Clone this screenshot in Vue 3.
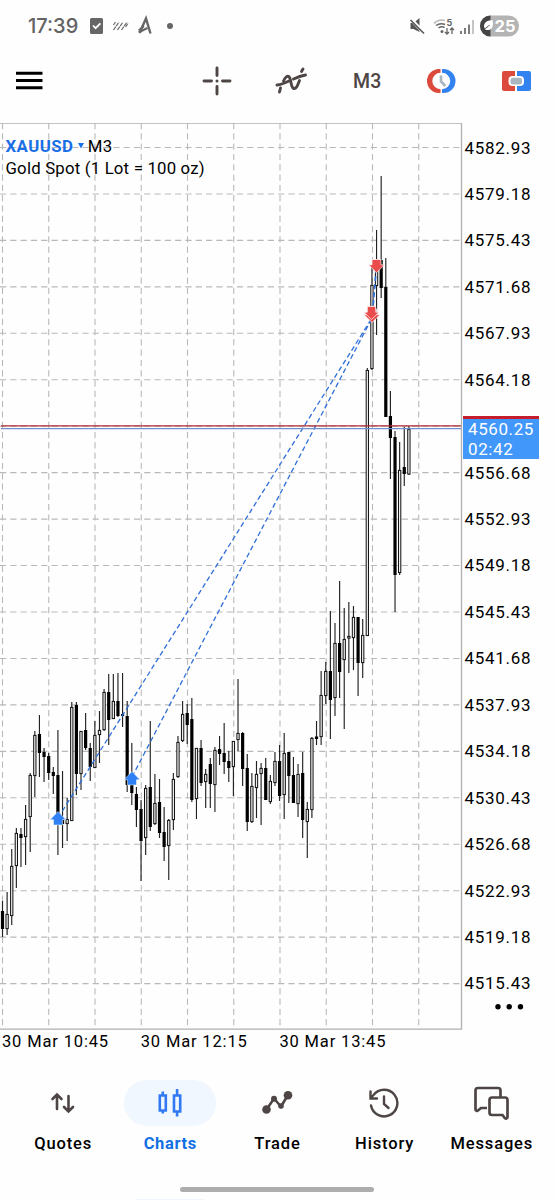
<script setup>
const step = 4.625
const x0 = 2.5
const gridX = Array.from({ length: 10 }, (_, i) => x0 + i * step * 10)
const gridY = Array.from({ length: 19 }, (_, i) => 24.5 + i * 46.45)
const prices = [
  '4582.93', '4579.18', '4575.43', '4571.68', '4567.93', '4564.18', '', '4556.68', '4552.93', '4549.18',
  '4545.43', '4541.68', '4537.93', '4534.18', '4530.43', '4526.68', '4522.93', '4519.18', '4515.43',
]

// high, low, body top, body bottom, 1 = falling (solid) / 0 = rising (hollow)
const raw = [
  [901, 937, 911, 929, 1], [892, 935, 914, 929, 0], [849, 925, 866, 916, 0], [828, 888, 833, 866, 0],
  [828, 867, 834, 838, 1], [805, 865, 819, 837, 0], [773, 852, 775, 817, 0], [731, 797, 735, 776, 0],
  [715, 777, 734, 753, 1], [748, 782, 752, 757, 1], [753, 780, 756, 773, 1], [767, 794, 772, 776, 1],
  [730, 855, 775, 823, 1], [771, 848, 820, 824, 1], [798, 841, 819, 824, 0], [702, 821, 707, 821, 0],
  [702, 795, 705, 774, 1], [731, 790, 731, 774, 0], [713, 750, 730, 748, 1], [743, 781, 748, 767, 1],
  [721, 768, 735, 768, 0], [711, 763, 730, 735, 0], [689, 731, 692, 730, 0], [674, 745, 692, 720, 1],
  [674, 719, 701, 719, 0], [673, 717, 701, 716, 1], [673, 727, 714, 716, 1], [701, 792, 716, 785, 1],
  [743, 805, 780, 793, 1], [787, 827, 794, 810, 1], [800, 881, 809, 841, 1], [785, 855, 788, 838, 0],
  [721, 831, 787, 827, 1], [774, 825, 803, 824, 0], [779, 838, 802, 833, 1], [807, 861, 832, 847, 1],
  [819, 880, 820, 846, 0], [773, 830, 779, 820, 0], [736, 778, 742, 777, 0], [701, 742, 714, 741, 0],
  [704, 744, 713, 725, 1], [698, 802, 719, 800, 1], [748, 819, 748, 799, 0], [740, 786, 748, 783, 1],
  [769, 808, 774, 782, 0], [758, 808, 764, 784, 1], [747, 812, 750, 785, 0], [736, 765, 749, 754, 1],
  [723, 774, 753, 762, 1], [751, 782, 761, 768, 1], [741, 796, 741, 767, 0], [679, 751, 733, 740, 0],
  [732, 786, 733, 769, 1], [754, 831, 768, 822, 1], [773, 823, 786, 822, 0], [761, 818, 774, 788, 0],
  [763, 825, 768, 774, 0], [758, 800, 768, 800, 1], [775, 804, 781, 802, 0], [752, 786, 761, 783, 0],
  [745, 801, 761, 796, 1], [733, 819, 753, 795, 0], [752, 803, 752, 776, 1], [757, 803, 775, 803, 1],
  [764, 817, 774, 804, 0], [752, 838, 773, 820, 1], [802, 858, 809, 822, 0], [737, 818, 738, 810, 0],
  [721, 745, 736.5, 739, 1], [671, 745, 695, 737, 0], [662, 704, 671, 696, 0], [611, 739, 671, 700, 1],
  [623, 716, 643, 698, 0], [581, 698, 643, 672, 1], [608, 729, 639, 660, 0], [602, 673, 636, 638.5, 0],
  [606, 670, 617, 638, 0], [617, 696, 617, 663, 1], [619, 678, 635, 663, 0], [368, 636, 370, 636, 0],
  [265, 370, 285, 369, 0], [230, 335, 262, 286, 0], [176, 298, 260, 288, 1], [258, 417, 287, 417, 1],
  [391, 479, 416, 438, 1], [431, 612, 437, 575, 1], [442, 575, 470, 573, 0], [427, 486, 467, 474, 1],
  [426, 475, 429, 474.5, 0],
]
const top = 123
const candles = raw.map(([h, l, t, b, solid], i) => ({
  x: x0 + i * 4.618, h: h - top, l: l - top, t: t - top, b: b - top, solid,
}))
</script>

<template>
  <div class="screen">
    <header class="status">
      <span class="clock">17:39</span>
      <svg class="notes" width="90" height="24" viewBox="0 0 90 24">
        <rect x="1" y="4" width="13" height="16" rx="1.500" fill="#666" />
        <path d="M4 11.500l2.600 2.700 4.800-4.800" fill="none" stroke="#fff" stroke-width="1.800" />
        <path d="M24.500 11l2-3M24.500 16l5.500-8M28.500 16l5.500-8M32.500 16l5.500-8M36.500 13l2.800-4" stroke="#666" stroke-width="1.200" stroke-dasharray="4 .800" />
        <path d="M50.500 19l6.500-14.500L61.500 19.500" fill="none" stroke="#666" stroke-width="2.400" />
        <path d="M49.800 18.200l8.700-4.200M49.800 16.500l5-4.500" fill="none" stroke="#666" stroke-width="2.200" />
        <circle cx="81" cy="12" r="3" fill="#666" />
      </svg>
      <svg class="signals" width="110" height="24" viewBox="0 0 110 24">
        <path d="M1.500 9h3l6-5v14l-6-3h-3z" fill="#555" />
        <path d="M1 4L15 19" stroke="#fff" stroke-width="3.400" /><path d="M1.500 6L15 19.500" stroke="#555" stroke-width="1.600" />
        <g fill="none" stroke="#666" stroke-width="1.500">
          <path d="M25 9.500a11 11 0 0 1 11-3" stroke="#bbb" />
          <path d="M27 11.500a9 9 0 0 1 9-1M29.500 14a6 6 0 0 1 6-.5" />
          <path d="M38 14v6M36 18l2 2 2-2M43 20v-6M41 16l2-2 2 2" stroke-width="1.300" />
        </g>
        <circle cx="33" cy="17.500" r="1.500" fill="#666" />
        <text x="37.500" y="12" class="band">5</text>
        <path d="M52 17v3M56 14v6M60 10.500v9.500" stroke="#666" stroke-width="1.700" />
        <path d="M64 6v14" stroke="#bbb" stroke-width="1.700" />
        <rect x="71" y="1.500" width="39" height="21" rx="10.500" fill="#b4b4b4" />
        <path d="M81.500 1.500a10.500 10.500 0 0 0 0 21z" fill="#444" />
        <path d="M75 12.500c0-5 4-6 8.500-6.500 1.200 5 0 9-3.500 10-1.500.3-3 0-4-.8z" fill="#fff" />
        <path d="M75 15.500c2-2 3.500-2 5.500-4.500" fill="none" stroke="#444" stroke-width="1" />
        <text x="85.500" y="18" class="battery">25</text>
      </svg>
    </header>

    <nav class="toolbar">
      <svg class="menu" width="28" height="20" viewBox="0 0 28 20"><path d="M1 2.300h26.500M1 9.500h26.500M1 16.700h26.500" stroke="#000" stroke-width="2.900" /></svg>
      <svg class="cross" width="30" height="30" viewBox="0 0 30 30">
        <path d="M15 2v7.500M15 20.500V28M2 15h7.500M20.500 15H28" stroke="#4e4545" stroke-width="2.900" stroke-linecap="round" />
        <circle cx="15" cy="15" r="1.500" fill="#4e4545" />
      </svg>
      <svg class="func" width="32" height="28" viewBox="0 0 32 28">
        <g fill="none" stroke="#4e4545" stroke-width="2.900" stroke-linecap="round">
          <path d="M2 18c5-.5 8-2 12-4M18.500 12c3.500-1.700 7-3.200 12-4" />
          <path d="M4.500 25l1-4M8.500 14c2-4.500 4.500-6.500 6.300-3 1.700 3.700 1 9.500 4 10.500 3 .5 4-4 5.700-8M26.500 4.500l1.500-2.500" />
        </g>
      </svg>
      <b class="frame">M3</b>
      <svg class="sessions" width="30" height="26" viewBox="0 0 30 26">
        <path d="M14.500 1H13a12 12 0 0 0 0 24h1.500v-3.800a8.200 8.200 0 0 1 0-16.400z" fill="#dc4a3d" />
        <path d="M16 1h1.500a12 12 0 0 1 0 24H16v-3.800a8.200 8.200 0 0 0 0-16.400z" fill="#3282ef" />
        <path d="M15 7.500v6l4.300 4.500" fill="none" stroke="#a9b5bf" stroke-width="2.600" />
      </svg>
      <svg class="trade" width="30" height="22" viewBox="0 0 30 22">
        <path d="M3 1h11v20H3a2 2 0 0 1-2-2V3a2 2 0 0 1 2-2z" fill="#dc4a3d" />
        <path d="M16 1h12a2 2 0 0 1 2 2v16a2 2 0 0 1-2 2H16z" fill="#3282ef" />
        <rect x="7.500" y="6" width="15.500" height="10" rx="4" fill="#fff" /><rect x="9.500" y="7.800" width="11.500" height="6.700" rx="2.500" fill="#a9b5bf" />
      </svg>
    </nav>

    <main class="chart">
      <svg class="plot" width="463" height="908" viewBox="0 0 463 908">
        <g stroke="#b9b9b9" stroke-width="1.100">
          <line v-for="x in gridX" :key="'x' + x" :x1="x" :x2="x" y1="0" y2="906" stroke-dasharray="6.200 4.100" />
          <line v-for="y in gridY" :key="'y' + y" x1="0" x2="461" :y1="y" :y2="y" stroke-dasharray="6.200 4.100" />
        </g>
        <path d="M0 .2H461.500V906.200H0" fill="none" stroke="#b0b0b0" stroke-width="1.300" />
        <g v-for="c in candles" :key="c.x">
          <line :x1="c.x" :x2="c.x" :y1="c.h" :y2="c.l" stroke="#222" stroke-width="1.150" />
          <rect v-if="c.solid" :x="c.x - 1.600" :y="c.t" width="3.200" :height="c.b - c.t" fill="#000" />
          <rect v-else :x="c.x - 1.150" :y="c.t + .4" width="2.300" :height="c.b - c.t - .8" fill="#eee" stroke="#111" stroke-width="1" />
        </g>
        <g fill="none" stroke="#2f6fd8" stroke-width="1.300" stroke-dasharray="5 3">
          <path d="M58 695L372 195" /><path d="M132 654L372 195" /><path d="M372.500 190L376.500 143" stroke-width="1.700" />
        </g>
        <path d="M1 302.900H461" stroke="#b02a30" stroke-width="1.300" />
        <path d="M1 305.700H461" stroke="#6f92cf" stroke-width="1.200" />
        <g fill="#2f80f5" stroke="#fff" stroke-width=".500">
          <path d="M58 688.500l8 8.200h-3.500v5.300h-9v-5.300H50z" /><path d="M132 648.500l8 8.200h-3.500v5.300h-9v-5.300H124z" />
        </g>
        <g fill="#ea4b4b" stroke="#fff" stroke-width=".700">
          <path d="M372 199.500l-8-7.700h3.500V186h9v5.800h3.500z" /><path d="M371.500 196.500l-7.500-7.300h3.300V183.500h8.400v5.700h3.300z" />
          <path d="M376.500 149.800l-8-8h3.500V136.500h9v5.300h3.500z" />
        </g>
      </svg>
      <ol class="scale"><li v-for="(p, i) in prices" :key="i">{{ p }}</li></ol>
      <div class="caption">
        <div><b>XAUUSD</b><svg width="6" height="6" viewBox="0 0 6 6"><path d="M0 0h6L3 5.500z" fill="#1a73e8" /></svg><span>M3</span></div>
        <div>Gold Spot (1 Lot = 100 oz)</div>
      </div>
      <div class="quote"><div>4560.25</div><div>02:42</div></div>
      <svg class="more" width="30" height="8" viewBox="0 0 30 8"><circle cx="4" cy="3.700" r="2.700" /><circle cx="15.200" cy="3.700" r="2.700" /><circle cx="26.500" cy="3.700" r="2.700" /></svg>
    </main>
    <div class="times"><span>30 Mar 10:45</span><span>30 Mar 12:15</span><span>30 Mar 13:45</span></div>

    <footer class="tabs">
      <div class="tab"><i><svg width="26" height="24" viewBox="0 0 26 24"><path d="M7 18V4.500M2.500 8L7 3.500 11.500 8M18.500 5v14.500M14 16l4.500 4.500L23 16" fill="none" stroke="#4e4545" stroke-width="2.600" stroke-linecap="round" /></svg></i><span>Quotes</span></div>
      <div class="tab active"><i><svg width="26" height="30" viewBox="0 0 26 30"><path d="M2.800 7.500h6v15h-6zM5.800 3.500v4M5.800 22.500v3M17 7.500h6.200v16H17zM20.100 1v6.500M20.100 23.500v5" fill="none" stroke="#3079f2" stroke-width="2.600" /></svg></i><span>Charts</span></div>
      <div class="tab"><i><svg width="32" height="28" viewBox="0 0 32 28"><path d="M5.500 20.500l7.500-11 7 8 7-11.500" fill="none" stroke="#4e4545" stroke-width="2.600" /><g fill="#4e4545"><circle cx="5.500" cy="20.500" r="4.300" /><circle cx="27" cy="6.200" r="4.300" /><circle cx="13" cy="9.800" r="3" /><circle cx="20" cy="17" r="2.800" /></g></svg></i><span>Trade</span></div>
      <div class="tab"><i><svg width="32" height="32" viewBox="0 0 32 32"><path d="M3 18.500a13.300 13.300 0 1 0 2.500-10.500L3 10.500M2.500 4.500v7H9M16 9.500v7.500l4.500 4" fill="none" stroke="#4e4545" stroke-width="2.400" stroke-linecap="round" /></svg></i><span>History</span></div>
      <div class="tab"><i><svg width="36" height="34" viewBox="0 0 36 34"><path d="M14 22H8l-3 2.500c-1 .7-2.500.2-2.500-1V4.500a2.500 2.500 0 0 1 2.500-2.500h20a2.500 2.500 0 0 1 2.500 2.500V11M19 11.500h13a2.500 2.500 0 0 1 2.500 2.500v17c0 1.500-2 2-2.800 1L29.500 29H19a2.500 2.500 0 0 1-2.500-2.500V14a2.500 2.500 0 0 1 2.500-2.500z" fill="none" stroke="#4e4545" stroke-width="2.700" /></svg></i><span>Messages</span></div>
    </footer>
    <div class="handle"></div>
    <div class="edge"></div>
  </div>
</template>

<style scoped>
.screen { width: 554px; height: 1200px; overflow: hidden; background: #fefefe; color: #000; font-family: Roboto, sans-serif; display: flex; flex-direction: column; box-sizing: border-box; }
.screen svg { display: block; flex: none; }
.status { height: 52px; flex: none; display: flex; align-items: center; padding: 0 35px 0 28px; box-sizing: border-box; }
.clock { font: 500 20px Inter, sans-serif; color: #636363; width: 61px; flex: none; }
.signals { margin-left: auto; }
.band { font: 700 9px Inter, sans-serif; fill: #666; }
.battery { font: 700 16.500px Inter, sans-serif; fill: #fff; }
.toolbar { height: 71px; flex: none; display: flex; align-items: center; padding: 0 23px 13px 15px; box-sizing: border-box; }
.cross { margin-left: 159px; }
.func { margin-left: 43px; }
.frame { font: 500 19.500px Roboto, sans-serif; letter-spacing: .200px; color: #4e4545; width: 28px; margin-left: 46px; }
.sessions { margin-left: 45px; }
.trade { margin-left: auto; }
.chart { position: relative; display: flex; height: 908px; flex: none; }
.scale { list-style: none; margin: 1.500px 0 0; padding: 0 0 0 1.500px; font-size: 17px; letter-spacing: .7px; }
.scale li { height: 46.450px; line-height: 46.450px; }
.caption { position: absolute; left: 5.500px; top: 12px; font-size: 16.800px; letter-spacing: .190px; line-height: 22px; white-space: nowrap; }
.caption > div { display: flex; align-items: center; }
.caption b { color: #1a6fe6; font-weight: 700; letter-spacing: .450px; }
.caption svg { margin: 0 4px 0 4.500px; }
.quote { position: absolute; left: 463px; top: 293px; width: 76px; height: 43px; box-sizing: border-box; border-top: 3px solid #c51d2b; background: #4297fb; color: #fff; padding-left: 5px; font-size: 17px; line-height: 20px; letter-spacing: .6px; }
.more { position: absolute; left: 494px; top: 880px; }
.times { display: flex; height: 24px; flex: none; font-size: 16.500px; line-height: 22px; letter-spacing: .850px; padding-left: 2px; }
.times span { width: 138.700px; white-space: nowrap; }
.tabs { display: flex; height: 132px; flex: none; padding: 25px 9px 0; box-sizing: border-box; }
.tab { width: 107.200px; flex: none; display: flex; flex-direction: column; align-items: center; font-size: 16.500px; font-weight: 500; letter-spacing: .850px; }
.tab i { width: 92px; height: 46px; border-radius: 23px; display: flex; align-items: center; justify-content: center; }
.tab span { line-height: 22px; margin: 7px -1px 0 0; }
.active i { background: #f0f7ff; }
.active span { color: #1270e3; font-weight: 700; letter-spacing: .650px; }
.handle { width: 194px; height: 5px; flex: none; border-radius: 3px; background: #adadad; margin: 0 0 0 180px; }
.edge { width: 68px; height: 2px; flex: none; background: #f0f6fd; margin: 7px 0 0 136px; }
</style>
